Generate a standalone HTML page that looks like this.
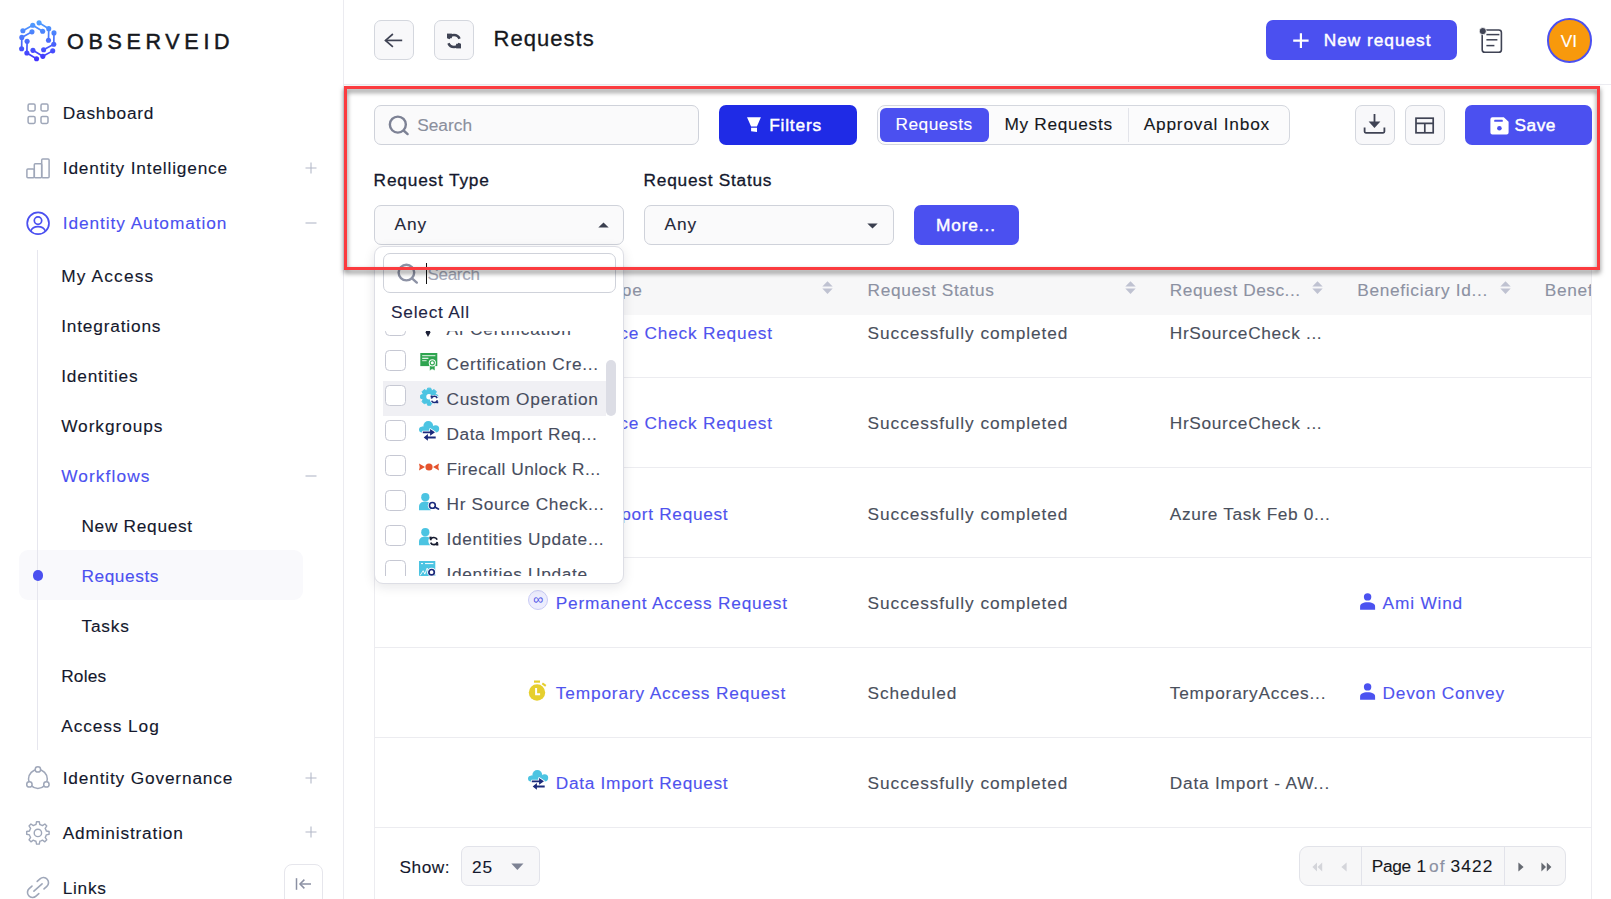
<!DOCTYPE html>
<html lang="en"><head><meta charset="utf-8"><title>Requests - ObserveID</title>
<style>
html,body{margin:0;padding:0;}
body{width:1611px;height:899px;overflow:hidden;position:relative;background:#fff;
font-family:"Liberation Sans",sans-serif;-webkit-font-smoothing:antialiased;}
.abs{position:absolute}
</style></head><body>
<nav><div style="position:absolute;left:343px;top:0px;width:1.0px;height:899.0px;box-sizing:border-box;background:#ebebf0"></div><span style="position:absolute;left:67.0px;top:27.5px;font-size:21.5px;font-weight:400;color:#16181d;line-height:28px;letter-spacing:4.690px;white-space:nowrap;-webkit-text-stroke:0.5px #16181d;">OBSERVEID</span><span style="position:absolute;left:62.8px;top:101.0px;font-size:17.3px;font-weight:400;color:#14182d;line-height:24px;letter-spacing:0.767px;white-space:nowrap;-webkit-text-stroke:0.12px #14182d;">Dashboard</span><span style="position:absolute;left:62.8px;top:155.9px;font-size:17.3px;font-weight:400;color:#14182d;line-height:24px;letter-spacing:0.821px;white-space:nowrap;-webkit-text-stroke:0.12px #14182d;">Identity Intelligence</span><span style="position:absolute;left:62.8px;top:210.8px;font-size:17.3px;font-weight:400;color:#4b50f0;line-height:24px;letter-spacing:0.922px;white-space:nowrap;-webkit-text-stroke:0.12px #4b50f0;">Identity Automation</span><div style="position:absolute;left:37px;top:250px;width:1.0px;height:500.0px;box-sizing:border-box;background:#e6e6ee"></div><span style="position:absolute;left:61.2px;top:263.9px;font-size:17.3px;font-weight:400;color:#14182d;line-height:24px;letter-spacing:1.173px;white-space:nowrap;-webkit-text-stroke:0.12px #14182d;">My Access</span><span style="position:absolute;left:61.2px;top:313.9px;font-size:17.3px;font-weight:400;color:#14182d;line-height:24px;letter-spacing:0.815px;white-space:nowrap;-webkit-text-stroke:0.12px #14182d;">Integrations</span><span style="position:absolute;left:61.2px;top:363.9px;font-size:17.3px;font-weight:400;color:#14182d;line-height:24px;letter-spacing:0.812px;white-space:nowrap;-webkit-text-stroke:0.12px #14182d;">Identities</span><span style="position:absolute;left:61.2px;top:414.1px;font-size:17.3px;font-weight:400;color:#14182d;line-height:24px;letter-spacing:0.936px;white-space:nowrap;-webkit-text-stroke:0.12px #14182d;">Workgroups</span><span style="position:absolute;left:61.2px;top:464.1px;font-size:17.3px;font-weight:400;color:#4b50f0;line-height:24px;letter-spacing:1.099px;white-space:nowrap;-webkit-text-stroke:0.12px #4b50f0;">Workflows</span><span style="position:absolute;left:81.4px;top:513.9px;font-size:17.3px;font-weight:400;color:#14182d;line-height:24px;letter-spacing:0.703px;white-space:nowrap;-webkit-text-stroke:0.12px #14182d;">New Request</span><div style="position:absolute;left:19px;top:550px;width:284.0px;height:50.0px;box-sizing:border-box;background:#f9f9fc;border-radius:9px"></div><div style="position:absolute;left:37px;top:550px;width:1.0px;height:50.0px;box-sizing:border-box;background:#e6e6ee"></div><div style="position:absolute;left:32.8px;top:570.4px;width:10.6px;height:10.6px;box-sizing:border-box;background:#4b50f0;border-radius:50%"></div><span style="position:absolute;left:81.4px;top:564.0px;font-size:17.3px;font-weight:400;color:#4b50f0;line-height:24px;letter-spacing:0.581px;white-space:nowrap;-webkit-text-stroke:0.12px #4b50f0;">Requests</span><span style="position:absolute;left:81.4px;top:614.0px;font-size:17.3px;font-weight:400;color:#14182d;line-height:24px;letter-spacing:0.848px;white-space:nowrap;-webkit-text-stroke:0.12px #14182d;">Tasks</span><span style="position:absolute;left:61.2px;top:664.0px;font-size:17.3px;font-weight:400;color:#14182d;line-height:24px;letter-spacing:0.198px;white-space:nowrap;-webkit-text-stroke:0.12px #14182d;">Roles</span><span style="position:absolute;left:61.2px;top:714.0px;font-size:17.3px;font-weight:400;color:#14182d;line-height:24px;letter-spacing:0.915px;white-space:nowrap;-webkit-text-stroke:0.12px #14182d;">Access Log</span><span style="position:absolute;left:62.7px;top:766.0px;font-size:17.3px;font-weight:400;color:#14182d;line-height:24px;letter-spacing:0.834px;white-space:nowrap;-webkit-text-stroke:0.12px #14182d;">Identity Governance</span><span style="position:absolute;left:62.7px;top:820.5px;font-size:17.3px;font-weight:400;color:#14182d;line-height:24px;letter-spacing:0.822px;white-space:nowrap;-webkit-text-stroke:0.12px #14182d;">Administration</span><span style="position:absolute;left:62.7px;top:875.8px;font-size:17.3px;font-weight:400;color:#14182d;line-height:24px;letter-spacing:0.734px;white-space:nowrap;-webkit-text-stroke:0.12px #14182d;">Links</span><svg style="position:absolute;left:0;top:0" width="80" height="80" viewBox="0 0 80 80"><defs><linearGradient id="lg" gradientUnits="userSpaceOnUse" x1="0" y1="21" x2="0" y2="61"><stop offset="0" stop-color="#4fa2ff"/><stop offset="0.5" stop-color="#4a6cfb"/><stop offset="1" stop-color="#4230ff"/></linearGradient></defs><path d="M22.88 30.73L32.75 25.25L42.66 31.27" stroke="url(#lg)" stroke-width="1.7" stroke-linejoin="round" fill="none"/><circle cx="22.88" cy="30.73" r="2.55" fill="url(#lg)"/><circle cx="32.75" cy="25.25" r="2.55" fill="url(#lg)"/><circle cx="42.66" cy="31.27" r="2.55" fill="url(#lg)"/><path d="M39.06 22.84L48.74 28.65L48.49 40.24" stroke="url(#lg)" stroke-width="1.7" stroke-linejoin="round" fill="none"/><circle cx="39.06" cy="22.84" r="2.55" fill="url(#lg)"/><circle cx="48.74" cy="28.65" r="2.55" fill="url(#lg)"/><circle cx="48.49" cy="40.24" r="2.55" fill="url(#lg)"/><path d="M53.98 32.91L53.79 44.20L43.63 49.77" stroke="url(#lg)" stroke-width="1.7" stroke-linejoin="round" fill="none"/><circle cx="53.98" cy="32.91" r="2.55" fill="url(#lg)"/><circle cx="53.79" cy="44.20" r="2.55" fill="url(#lg)"/><circle cx="43.63" cy="49.77" r="2.55" fill="url(#lg)"/><path d="M52.72 50.87L42.85 56.35L32.94 50.33" stroke="url(#lg)" stroke-width="1.7" stroke-linejoin="round" fill="none"/><circle cx="52.72" cy="50.87" r="2.55" fill="url(#lg)"/><circle cx="42.85" cy="56.35" r="2.55" fill="url(#lg)"/><circle cx="32.94" cy="50.33" r="2.55" fill="url(#lg)"/><path d="M36.54 58.76L26.86 52.95L27.11 41.36" stroke="url(#lg)" stroke-width="1.7" stroke-linejoin="round" fill="none"/><circle cx="36.54" cy="58.76" r="2.55" fill="url(#lg)"/><circle cx="26.86" cy="52.95" r="2.55" fill="url(#lg)"/><circle cx="27.11" cy="41.36" r="2.55" fill="url(#lg)"/><path d="M21.62 48.69L21.81 37.40L31.97 31.83" stroke="url(#lg)" stroke-width="1.7" stroke-linejoin="round" fill="none"/><circle cx="21.62" cy="48.69" r="2.55" fill="url(#lg)"/><circle cx="21.81" cy="37.40" r="2.55" fill="url(#lg)"/><circle cx="31.97" cy="31.83" r="2.55" fill="url(#lg)"/></svg><svg style="position:absolute;left:0px;top:0px;top:0" width="60" height="130" viewBox="0 0 60 130" fill="none"><rect x="28.1" y="104" width="7" height="7" rx="1.4" stroke="#9fa7b9" stroke-width="1.5"/><rect x="41" y="104" width="7" height="7" rx="1.4" stroke="#9fa7b9" stroke-width="1.5"/><rect x="28.1" y="116.4" width="7" height="7" rx="1.4" stroke="#9fa7b9" stroke-width="1.5"/><rect x="41" y="116.4" width="7" height="7" rx="1.4" stroke="#9fa7b9" stroke-width="1.5"/></svg><svg style="position:absolute;left:0px;top:150px;" width="60" height="40" viewBox="0 0 60 40" fill="none"><g stroke="#9fa7b9" stroke-width="1.5" stroke-linejoin="round"><rect x="26.9" y="19" width="7.4" height="8.7" rx="1"/><rect x="34.3" y="13.8" width="7.4" height="13.9" rx="1"/><rect x="41.7" y="8.9" width="7.4" height="18.8" rx="1"/></g></svg><svg style="position:absolute;left:20px;top:205px;" width="36" height="36" viewBox="0 0 36 36" fill="none"><g stroke="#4b50f0" stroke-width="1.7" fill="none"><circle cx="18.1" cy="18.3" r="10.9"/><circle cx="18" cy="15.6" r="3.7"/><path d="M10.6 26.2c1.2-3 4.1-4.6 7.4-4.6s6.3 1.6 7.5 4.6"/></g></svg><svg style="position:absolute;left:20px;top:760px;" width="36" height="36" viewBox="0 0 36 36" fill="none"><g stroke="#9fa7b9" stroke-width="1.5" fill="#fff"><circle cx="17.9" cy="19" r="9.4" fill="none"/><circle cx="17.9" cy="9.4" r="2.7"/><circle cx="9.4" cy="24.4" r="2.7"/><circle cx="26.4" cy="24.4" r="2.7"/></g></svg><svg style="position:absolute;left:20px;top:815px;" width="36" height="36" viewBox="0 0 36 36" fill="none"><path d="M14.84 9.86L15.97 9.52L16.53 6.68L19.27 6.68L19.83 9.52L21.42 10.05L22.47 10.61L24.86 9.00L26.80 10.94L25.19 13.33L25.94 14.84L26.28 15.97L29.12 16.53L29.12 19.27L26.28 19.83L25.75 21.42L25.19 22.47L26.80 24.86L24.86 26.80L22.47 25.19L20.96 25.94L19.83 26.28L19.27 29.12L16.53 29.12L15.97 26.28L14.38 25.75L13.33 25.19L10.94 26.80L9.00 24.86L10.61 22.47L9.86 20.96L9.52 19.83L6.68 19.27L6.68 16.53L9.52 15.97L10.05 14.38L10.61 13.33L9.00 10.94L10.94 9.00L13.33 10.61Z" stroke="#9fa7b9" stroke-width="1.4" stroke-linejoin="round"/><circle cx="17.9" cy="17.9" r="3.7" stroke="#9fa7b9" stroke-width="1.4"/></svg><svg style="position:absolute;left:20px;top:870px;" width="36" height="36" viewBox="0 0 36 36" fill="none"><g transform="rotate(-42 18 17.5)" stroke="#9fa7b9" stroke-width="1.6" stroke-linecap="round" fill="none"><path d="M14.5 12.4h-3.8a5.1 5.1 0 0 0 0 10.2h3.8"/><path d="M21.5 12.4h3.8a5.1 5.1 0 0 1 0 10.2h-3.8"/><path d="M12.5 17.5h11"/></g></svg><svg style="position:absolute;left:304.5px;top:161.7px;" width="12" height="12" viewBox="0 0 12 12" fill="none"><path d="M6 0.5v11M0.5 6h11" stroke="#b3b8c8" stroke-width="1.1"/></svg><svg style="position:absolute;left:304.5px;top:216.5px;" width="12" height="12" viewBox="0 0 12 12" fill="none"><path d="M0.5 6h11" stroke="#b3b8c8" stroke-width="1.1"/></svg><svg style="position:absolute;left:304.5px;top:469.9px;" width="12" height="12" viewBox="0 0 12 12" fill="none"><path d="M0.5 6h11" stroke="#b3b8c8" stroke-width="1.1"/></svg><svg style="position:absolute;left:304.5px;top:771.7px;" width="12" height="12" viewBox="0 0 12 12" fill="none"><path d="M6 0.5v11M0.5 6h11" stroke="#b3b8c8" stroke-width="1.1"/></svg><svg style="position:absolute;left:304.5px;top:826.3px;" width="12" height="12" viewBox="0 0 12 12" fill="none"><path d="M6 0.5v11M0.5 6h11" stroke="#b3b8c8" stroke-width="1.1"/></svg><div style="position:absolute;left:284.3px;top:863.9px;width:39.2px;height:46.1px;box-sizing:border-box;border:1px solid #e6e6ec;border-radius:8px;background:#fff"></div><svg style="position:absolute;left:294px;top:874px;" width="20" height="20" viewBox="0 0 20 20" fill="none"><g stroke="#8b90a3" stroke-width="1.5" fill="none"><path d="M2.5 4.2v11.6"/><path d="M17 10H6.2"/><path d="M10.4 5.6L6 10l4.4 4.4"/></g></svg></nav><header><div style="position:absolute;left:344px;top:84px;width:1267.0px;height:1.0px;box-sizing:border-box;background:#ececf1"></div><div style="position:absolute;left:374.2px;top:20.1px;width:39.6px;height:39.6px;box-sizing:border-box;background:#f8f8fa;border:1px solid #d4d7de;border-radius:7px"></div><div style="position:absolute;left:434.2px;top:20.1px;width:39.6px;height:39.6px;box-sizing:border-box;background:#f8f8fa;border:1px solid #d4d7de;border-radius:7px"></div><h1 style="position:absolute;left:493.6px;top:24.1px;font-size:22px;font-weight:400;color:#16181d;line-height:30px;letter-spacing:1.021px;white-space:nowrap;-webkit-text-stroke:0.3px #16181d;margin:0;">Requests</h1><div style="position:absolute;left:1266px;top:20px;width:191.0px;height:39.9px;box-sizing:border-box;background:#4b50f0;border-radius:7px"></div><span style="position:absolute;left:1323.7px;top:27.6px;font-size:17.3px;font-weight:400;color:#fff;line-height:24px;letter-spacing:0.983px;white-space:nowrap;-webkit-text-stroke:0.45px #fff;">New request</span><svg style="position:absolute;left:380px;top:30px;" width="30" height="22" viewBox="0 0 30 22" fill="none"><g stroke="#3f4354" stroke-width="1.7" fill="none" stroke-linejoin="miter"><path d="M5.6 10.4h16.6"/><path d="M12.9 4.0L5.5 10.4L12.9 16.8"/></g></svg><svg style="position:absolute;left:441.90px;top:28.50px" width="24.0" height="24.0" viewBox="0 0 24 24"><path d="M6.44 9.75A6.0 6.0 0 0 1 17.56 9.75" stroke="#3f4354" stroke-width="2.5" fill="none"/><path d="M17.56 14.25A6.0 6.0 0 0 1 6.44 14.25" stroke="#3f4354" stroke-width="2.5" fill="none"/><path d="M5.0 4.6h4.9v4.6H5.0z" fill="#3f4354"/><path d="M19.0 19.4h-4.9v-4.6H19.0z" fill="#3f4354"/></svg><svg style="position:absolute;left:1292px;top:32px;" width="18" height="18" viewBox="0 0 18 18" fill="none"><path d="M8.9 1.2v14.9M1.2 8.6h15.4" stroke="#fff" stroke-width="2.2"/></svg><svg style="position:absolute;left:1476px;top:25px;" width="30" height="32" viewBox="0 0 30 32" fill="none"><rect x="6.2" y="5" width="19.2" height="22.3" rx="2.6" stroke="#3f4354" stroke-width="1.6" fill="#fff"/><circle cx="6.8" cy="6.1" r="3.6" fill="#3f4354" stroke="#fff" stroke-width="0.8"/><g stroke="#3f4354" stroke-width="1.5"><path d="M10.4 9.6h13"/><path d="M10.4 14.8h11"/><path d="M10.4 20.6h8"/></g></svg><div style="position:absolute;left:1547px;top:18px;width:44.6px;height:44.6px;box-sizing:border-box;background:#f8990c;border:2px solid #4b50f0;border-radius:50%"></div><span style="position:absolute;left:1560.7px;top:28.8px;font-size:17.3px;font-weight:400;color:#fff;line-height:24px;letter-spacing:0.052px;white-space:nowrap;-webkit-text-stroke:0.12px #fff;">VI</span></header><main><div style="position:absolute;left:374px;top:268px;width:1.0px;height:631.0px;box-sizing:border-box;background:#ececf0"></div><div style="position:absolute;left:1591px;top:268px;width:1.0px;height:631.0px;box-sizing:border-box;background:#ececf0"></div><div style="position:absolute;left:375px;top:268px;width:1216.0px;height:46.6px;box-sizing:border-box;background:#f7f7f8"></div><span style="position:absolute;left:526.4px;top:278.4px;font-size:17.3px;font-weight:400;color:#8c91a2;line-height:24px;letter-spacing:0.832px;white-space:nowrap;-webkit-text-stroke:0.12px #8c91a2;">Request Type</span><span style="position:absolute;left:867.6px;top:278.4px;font-size:17.3px;font-weight:400;color:#8c91a2;line-height:24px;letter-spacing:0.624px;white-space:nowrap;-webkit-text-stroke:0.12px #8c91a2;">Request Status</span><span style="position:absolute;left:1169.8px;top:278.4px;font-size:17.3px;font-weight:400;color:#8c91a2;line-height:24px;letter-spacing:0.523px;white-space:nowrap;-webkit-text-stroke:0.12px #8c91a2;">Request Desc...</span><span style="position:absolute;left:1357.2px;top:278.4px;font-size:17.3px;font-weight:400;color:#8c91a2;line-height:24px;letter-spacing:0.686px;white-space:nowrap;-webkit-text-stroke:0.12px #8c91a2;">Beneficiary Id...</span><div style="position:absolute;left:1545.3px;top:278px;width:45.7px;height:24.0px;box-sizing:border-box;overflow:hidden"><span style="position:absolute;left:-0.6px;top:0.2px;font-size:17.3px;font-weight:400;color:#8c91a2;line-height:24px;letter-spacing:0.692px;white-space:nowrap;-webkit-text-stroke:0.12px #8c91a2;">Beneficiary</span></div><svg style="position:absolute;left:822.0px;top:281.2px;" width="11" height="13.2" viewBox="0 0 11 13.2" fill="none"><path d="M0.3 5.6L5.5 0.2L10.7 5.6z" fill="#bfc2d1"/><path d="M0.3 7.6L5.5 13L10.7 7.6z" fill="#bfc2d1"/></svg><svg style="position:absolute;left:1124.5px;top:281.2px;" width="11" height="13.2" viewBox="0 0 11 13.2" fill="none"><path d="M0.3 5.6L5.5 0.2L10.7 5.6z" fill="#bfc2d1"/><path d="M0.3 7.6L5.5 13L10.7 7.6z" fill="#bfc2d1"/></svg><svg style="position:absolute;left:1312.1px;top:281.2px;" width="11" height="13.2" viewBox="0 0 11 13.2" fill="none"><path d="M0.3 5.6L5.5 0.2L10.7 5.6z" fill="#bfc2d1"/><path d="M0.3 7.6L5.5 13L10.7 7.6z" fill="#bfc2d1"/></svg><svg style="position:absolute;left:1499.7px;top:281.2px;" width="11" height="13.2" viewBox="0 0 11 13.2" fill="none"><path d="M0.3 5.6L5.5 0.2L10.7 5.6z" fill="#bfc2d1"/><path d="M0.3 7.6L5.5 13L10.7 7.6z" fill="#bfc2d1"/></svg><a style="position:absolute;left:554.3px;top:321.4px;font-size:17.3px;font-weight:400;color:#4f53ee;line-height:24px;letter-spacing:0.770px;white-space:nowrap;-webkit-text-stroke:0.12px #4f53ee;">Hr Source Check Request</a><span style="position:absolute;left:867.6px;top:321.4px;font-size:17.3px;font-weight:400;color:#4a4f5c;line-height:24px;letter-spacing:0.919px;white-space:nowrap;-webkit-text-stroke:0.12px #4a4f5c;">Successfully completed</span><span style="position:absolute;left:1169.8px;top:321.4px;font-size:17.3px;font-weight:400;color:#4a4f5c;line-height:24px;letter-spacing:0.668px;white-space:nowrap;-webkit-text-stroke:0.12px #4a4f5c;">HrSourceCheck ...</span><svg style="position:absolute;left:528.00px;top:322.60px" width="22" height="20" viewBox="0 0 22 20"><circle cx="6.3" cy="4.2" r="4.1" fill="#4cc4e2"/><path d="M0 17.2v-3.6c0-3 2.4-5.2 6.3-5.2c2.6 0 4.6 0.9 5.6 2.6v6.2z" fill="#4cc4e2"/><circle cx="13.4" cy="12.4" r="4.6" fill="#fff"/><path d="M15.5 14.2l4.2 2.4" stroke="#fff" stroke-width="3.4" stroke-linecap="round"/><circle cx="13.4" cy="12.4" r="2.9" fill="#fff" stroke="#1b2a7b" stroke-width="1.6"/><path d="M15.8 14.1l3.6 2" stroke="#1b2a7b" stroke-width="1.7" stroke-linecap="round"/></svg><div style="position:absolute;left:375px;top:377.1px;width:1216.0px;height:1.0px;box-sizing:border-box;background:#ececf0"></div><a style="position:absolute;left:554.3px;top:411.4px;font-size:17.3px;font-weight:400;color:#4f53ee;line-height:24px;letter-spacing:0.770px;white-space:nowrap;-webkit-text-stroke:0.12px #4f53ee;">Hr Source Check Request</a><span style="position:absolute;left:867.6px;top:411.4px;font-size:17.3px;font-weight:400;color:#4a4f5c;line-height:24px;letter-spacing:0.919px;white-space:nowrap;-webkit-text-stroke:0.12px #4a4f5c;">Successfully completed</span><span style="position:absolute;left:1169.8px;top:411.4px;font-size:17.3px;font-weight:400;color:#4a4f5c;line-height:24px;letter-spacing:0.668px;white-space:nowrap;-webkit-text-stroke:0.12px #4a4f5c;">HrSourceCheck ...</span><svg style="position:absolute;left:528.00px;top:412.70px" width="22" height="20" viewBox="0 0 22 20"><circle cx="6.3" cy="4.2" r="4.1" fill="#4cc4e2"/><path d="M0 17.2v-3.6c0-3 2.4-5.2 6.3-5.2c2.6 0 4.6 0.9 5.6 2.6v6.2z" fill="#4cc4e2"/><circle cx="13.4" cy="12.4" r="4.6" fill="#fff"/><path d="M15.5 14.2l4.2 2.4" stroke="#fff" stroke-width="3.4" stroke-linecap="round"/><circle cx="13.4" cy="12.4" r="2.9" fill="#fff" stroke="#1b2a7b" stroke-width="1.6"/><path d="M15.8 14.1l3.6 2" stroke="#1b2a7b" stroke-width="1.7" stroke-linecap="round"/></svg><div style="position:absolute;left:375px;top:467.2px;width:1216.0px;height:1.0px;box-sizing:border-box;background:#ececf0"></div><a style="position:absolute;left:555.8px;top:501.5px;font-size:17.3px;font-weight:400;color:#4f53ee;line-height:24px;letter-spacing:0.690px;white-space:nowrap;-webkit-text-stroke:0.12px #4f53ee;">Data Import Request</a><span style="position:absolute;left:867.6px;top:501.5px;font-size:17.3px;font-weight:400;color:#4a4f5c;line-height:24px;letter-spacing:0.919px;white-space:nowrap;-webkit-text-stroke:0.12px #4a4f5c;">Successfully completed</span><span style="position:absolute;left:1169.8px;top:501.5px;font-size:17.3px;font-weight:400;color:#4a4f5c;line-height:24px;letter-spacing:0.629px;white-space:nowrap;-webkit-text-stroke:0.12px #4a4f5c;">Azure Task Feb 0...</span><svg style="position:absolute;left:528.00px;top:500.60px" width="22" height="22" viewBox="0 0 22 22"><g fill="#4cc4e2"><circle cx="9.3" cy="4.9" r="4.9"/><circle cx="2.9" cy="8.6" r="2.9"/><circle cx="16.6" cy="7.8" r="3.6"/><rect x="2.9" y="5.5" width="13.7" height="6"/></g><path d="M3.8 10.5h7.3V8l4.9 3.3l-4.9 3.4v-2.5H3.8z" fill="#fff" stroke="#fff" stroke-width="1.7" stroke-linejoin="round"/><path d="M16.7 15.6H8.9v-2.5l-4.2 3.4l4.2 3.3v-2.4h7.8z" fill="#fff" stroke="#fff" stroke-width="1.7" stroke-linejoin="round"/><path d="M3.8 10.5h7.3V8l4.9 3.3l-4.9 3.4v-2.5H3.8z" fill="#1b2a7b"/><path d="M16.7 15.6H8.9v-2.5l-4.2 3.4l4.2 3.3v-2.4h7.8z" fill="#1b2a7b"/></svg><div style="position:absolute;left:375px;top:557.2px;width:1216.0px;height:1.0px;box-sizing:border-box;background:#ececf0"></div><a style="position:absolute;left:555.8px;top:591.2px;font-size:17.3px;font-weight:400;color:#4f53ee;line-height:24px;letter-spacing:0.784px;white-space:nowrap;-webkit-text-stroke:0.12px #4f53ee;">Permanent Access Request</a><span style="position:absolute;left:867.6px;top:591.2px;font-size:17.3px;font-weight:400;color:#4a4f5c;line-height:24px;letter-spacing:0.919px;white-space:nowrap;-webkit-text-stroke:0.12px #4a4f5c;">Successfully completed</span><a style="position:absolute;left:1382.6px;top:591.2px;font-size:17.3px;font-weight:400;color:#4f53ee;line-height:24px;letter-spacing:0.806px;white-space:nowrap;-webkit-text-stroke:0.12px #4f53ee;">Ami Wind</a><span style="position:absolute;left:528px;top:590.4px;width:20px;height:20px;box-sizing:border-box;border-radius:50%;background:#ededfd;border:1px solid #c9cbf6;color:#5558e8;font-size:14px;line-height:17px;text-align:center;">∞</span><svg style="position:absolute;left:1360.00px;top:592.70px" width="16" height="18" viewBox="0 0 16 18"><circle cx="7.6" cy="3.9" r="3.7" fill="#4b52f0"/><path d="M0.1 16.8v-3.2c0-2.6 2.6-4.3 7.5-4.3s7.5 1.7 7.5 4.3v3.2z" fill="#4b52f0"/></svg><div style="position:absolute;left:375px;top:647px;width:1216.0px;height:1.0px;box-sizing:border-box;background:#ececf0"></div><a style="position:absolute;left:555.8px;top:681.4px;font-size:17.3px;font-weight:400;color:#4f53ee;line-height:24px;letter-spacing:0.836px;white-space:nowrap;-webkit-text-stroke:0.12px #4f53ee;">Temporary Access Request</a><span style="position:absolute;left:867.6px;top:681.4px;font-size:17.3px;font-weight:400;color:#4a4f5c;line-height:24px;letter-spacing:0.899px;white-space:nowrap;-webkit-text-stroke:0.12px #4a4f5c;">Scheduled</span><span style="position:absolute;left:1169.8px;top:681.4px;font-size:17.3px;font-weight:400;color:#4a4f5c;line-height:24px;letter-spacing:0.787px;white-space:nowrap;-webkit-text-stroke:0.12px #4a4f5c;">TemporaryAcces...</span><a style="position:absolute;left:1382.6px;top:681.4px;font-size:17.3px;font-weight:400;color:#4f53ee;line-height:24px;letter-spacing:0.738px;white-space:nowrap;-webkit-text-stroke:0.12px #4f53ee;">Devon Convey</a><svg style="position:absolute;left:528.00px;top:680.10px" width="22" height="22" viewBox="0 0 22 22"><circle cx="9" cy="12.5" r="8.2" fill="#e6cf2e"/><rect x="6" y="0.5" width="6" height="2.2" fill="#e6cf2e"/><path d="M14.3 3.4L17.8 5.8" stroke="#e6cf2e" stroke-width="2.1"/><path d="M8.1 8v6.3h4" stroke="#fff" stroke-width="2" fill="none"/></svg><svg style="position:absolute;left:1360.00px;top:682.80px" width="16" height="18" viewBox="0 0 16 18"><circle cx="7.6" cy="3.9" r="3.7" fill="#4b52f0"/><path d="M0.1 16.8v-3.2c0-2.6 2.6-4.3 7.5-4.3s7.5 1.7 7.5 4.3v3.2z" fill="#4b52f0"/></svg><div style="position:absolute;left:375px;top:737.1px;width:1216.0px;height:1.0px;box-sizing:border-box;background:#ececf0"></div><a style="position:absolute;left:555.8px;top:771.2px;font-size:17.3px;font-weight:400;color:#4f53ee;line-height:24px;letter-spacing:0.690px;white-space:nowrap;-webkit-text-stroke:0.12px #4f53ee;">Data Import Request</a><span style="position:absolute;left:867.6px;top:771.2px;font-size:17.3px;font-weight:400;color:#4a4f5c;line-height:24px;letter-spacing:0.919px;white-space:nowrap;-webkit-text-stroke:0.12px #4a4f5c;">Successfully completed</span><span style="position:absolute;left:1169.8px;top:771.2px;font-size:17.3px;font-weight:400;color:#4a4f5c;line-height:24px;letter-spacing:0.785px;white-space:nowrap;-webkit-text-stroke:0.12px #4a4f5c;">Data Import - AW...</span><svg style="position:absolute;left:528.00px;top:770.40px" width="22" height="22" viewBox="0 0 22 22"><g fill="#4cc4e2"><circle cx="9.3" cy="4.9" r="4.9"/><circle cx="2.9" cy="8.6" r="2.9"/><circle cx="16.6" cy="7.8" r="3.6"/><rect x="2.9" y="5.5" width="13.7" height="6"/></g><path d="M3.8 10.5h7.3V8l4.9 3.3l-4.9 3.4v-2.5H3.8z" fill="#fff" stroke="#fff" stroke-width="1.7" stroke-linejoin="round"/><path d="M16.7 15.6H8.9v-2.5l-4.2 3.4l4.2 3.3v-2.4h7.8z" fill="#fff" stroke="#fff" stroke-width="1.7" stroke-linejoin="round"/><path d="M3.8 10.5h7.3V8l4.9 3.3l-4.9 3.4v-2.5H3.8z" fill="#1b2a7b"/><path d="M16.7 15.6H8.9v-2.5l-4.2 3.4l4.2 3.3v-2.4h7.8z" fill="#1b2a7b"/></svg><div style="position:absolute;left:375px;top:827px;width:1216.0px;height:1.0px;box-sizing:border-box;background:#ececf0"></div><span style="position:absolute;left:399.6px;top:854.5px;font-size:17.3px;font-weight:400;color:#14182d;line-height:24px;letter-spacing:0.462px;white-space:nowrap;-webkit-text-stroke:0.12px #14182d;">Show:</span><div style="position:absolute;left:461.2px;top:846.2px;width:78.4px;height:39.6px;box-sizing:border-box;background:#f7f7f9;border:1px solid #e2e3ea;border-radius:7px"></div><span style="position:absolute;left:472.0px;top:854.5px;font-size:17.3px;font-weight:400;color:#14182d;line-height:24px;letter-spacing:0.846px;white-space:nowrap;-webkit-text-stroke:0.12px #14182d;">25</span><svg style="position:absolute;left:510.8px;top:863px;" width="12.8" height="7.4" viewBox="0 0 12.8 7.4" fill="none"><path d="M0.3 0.4L6.4 7L12.5 0.4z" fill="#7d8294"/></svg><div style="position:absolute;left:1299.3px;top:846px;width:266.7px;height:39.7px;box-sizing:border-box;background:#f7f7f8;border:1px solid #e2e3e9;border-radius:9px"></div><div style="position:absolute;left:1361px;top:846.5px;width:1.0px;height:38.5px;box-sizing:border-box;background:#e2e3ea"></div><div style="position:absolute;left:1504.2px;top:846.5px;width:1.0px;height:38.5px;box-sizing:border-box;background:#e2e3ea"></div><svg style="position:absolute;left:1311.6px;top:861.6px;" width="11" height="10" viewBox="0 0 11 10" fill="none"><path d="M5 0.4v9.2L0.4 5zM10.2 0.4v9.2L5.6 5z" fill="#d4d5da"/></svg><svg style="position:absolute;left:1341.2px;top:861.6px;" width="6" height="10" viewBox="0 0 6 10" fill="none"><path d="M5.6 0.4v9.2L0.4 5z" fill="#d4d5da"/></svg><svg style="position:absolute;left:1518px;top:861.6px;" width="6" height="10" viewBox="0 0 6 10" fill="none"><path d="M0.4 0.4v9.2L5.6 5z" fill="#666a72"/></svg><svg style="position:absolute;left:1541.4px;top:861.6px;" width="11" height="10" viewBox="0 0 11 10" fill="none"><path d="M0.4 0.4v9.2L5 5zM5.8 0.4v9.2L10.4 5z" fill="#666a72"/></svg><span style="position:absolute;left:1371.7px;top:854.2px;font-size:17.3px;font-weight:400;color:#16181d;line-height:24px;letter-spacing:-0.332px;white-space:nowrap;-webkit-text-stroke:0.12px #16181d;">Page</span><span style="position:absolute;left:1416.4px;top:854.2px;font-size:17.3px;font-weight:400;color:#16181d;line-height:24px;letter-spacing:0.692px;white-space:nowrap;-webkit-text-stroke:0.12px #16181d;">1</span><span style="position:absolute;left:1429.1px;top:854.2px;font-size:17.3px;font-weight:400;color:#8c91a2;line-height:24px;letter-spacing:0.958px;white-space:nowrap;-webkit-text-stroke:0.12px #8c91a2;">of</span><span style="position:absolute;left:1450.5px;top:854.2px;font-size:17.3px;font-weight:400;color:#16181d;line-height:24px;letter-spacing:1.176px;white-space:nowrap;-webkit-text-stroke:0.12px #16181d;">3422</span></main><div style="position:absolute;left:345px;top:86px;width:1266.0px;height:182.0px;box-sizing:border-box;background:#fff"></div><section><div style="position:absolute;left:374.2px;top:105px;width:324.5px;height:40.0px;box-sizing:border-box;background:#fafafb;border:1px solid #cfd2da;border-radius:7px"></div><span style="position:absolute;left:417.2px;top:113.2px;font-size:17.3px;font-weight:400;color:#8a8f9d;line-height:24px;letter-spacing:0.023px;white-space:nowrap;-webkit-text-stroke:0.12px #8a8f9d;">Search</span><div style="position:absolute;left:719.1px;top:105px;width:137.8px;height:40.0px;box-sizing:border-box;background:#1f2be6;border-radius:7px"></div><span style="position:absolute;left:769.2px;top:113.2px;font-size:17.3px;font-weight:400;color:#fff;line-height:24px;letter-spacing:0.817px;white-space:nowrap;-webkit-text-stroke:0.45px #fff;">Filters</span><div style="position:absolute;left:877.1px;top:105px;width:412.6px;height:40.0px;box-sizing:border-box;background:#fbfbfc;border:1px solid #d4d7de;border-radius:8px"></div><div style="position:absolute;left:880px;top:108.2px;width:109.0px;height:33.6px;box-sizing:border-box;background:#4b50f0;border-radius:6px"></div><span style="position:absolute;left:895.4px;top:111.8px;font-size:17.3px;font-weight:400;color:#fff;line-height:24px;letter-spacing:0.538px;white-space:nowrap;-webkit-text-stroke:0.12px #fff;">Requests</span><span style="position:absolute;left:1004.4px;top:111.8px;font-size:17.3px;font-weight:400;color:#16181d;line-height:24px;letter-spacing:0.682px;white-space:nowrap;-webkit-text-stroke:0.12px #16181d;">My Requests</span><div style="position:absolute;left:1128px;top:108.2px;width:1.0px;height:33.6px;box-sizing:border-box;background:#e3e4ea"></div><span style="position:absolute;left:1143.8px;top:111.8px;font-size:17.3px;font-weight:400;color:#16181d;line-height:24px;letter-spacing:0.776px;white-space:nowrap;-webkit-text-stroke:0.12px #16181d;">Approval Inbox</span><div style="position:absolute;left:1355.2px;top:105px;width:39.6px;height:40.0px;box-sizing:border-box;background:#f8f8fa;border:1px solid #d4d7de;border-radius:7px"></div><div style="position:absolute;left:1405.1px;top:105px;width:39.6px;height:40.0px;box-sizing:border-box;background:#f8f8fa;border:1px solid #d4d7de;border-radius:7px"></div><div style="position:absolute;left:1465px;top:105px;width:127.0px;height:40.0px;box-sizing:border-box;background:#4b50f0;border-radius:7px"></div><span style="position:absolute;left:1514.6px;top:113.2px;font-size:17.3px;font-weight:400;color:#fff;line-height:24px;letter-spacing:0.453px;white-space:nowrap;-webkit-text-stroke:0.45px #fff;">Save</span><svg style="position:absolute;left:386px;top:113px;" width="26" height="26" viewBox="0 0 26 26" fill="none"><g stroke="#7d8295" stroke-width="2.4" fill="none"><circle cx="11.85" cy="11.6" r="8"/><path d="M17.6 17.5L21.6 21.1" stroke-linecap="round"/></g></svg><svg style="position:absolute;left:745px;top:115px;" width="18" height="20" viewBox="0 0 18 20" fill="none"><path d="M2 2.3h13.9L11.9 11.4H6.1z M6.1 12.8h5.9v4.2L6.1 16.2z" fill="#fff"/></svg><svg style="position:absolute;left:1360px;top:110px;" width="30" height="28" viewBox="0 0 30 28" fill="none"><g stroke="#3f4354" stroke-width="1.8" fill="none"><path d="M4.6 17.4v4.2a1.2 1.2 0 0 0 1.2 1.2h17.4a1.2 1.2 0 0 0 1.2-1.2v-4.2"/><path d="M14.5 4v9"/></g><path d="M8.6 11.6h11.8L14.5 17.9z" fill="#3f4354"/></svg><svg style="position:absolute;left:1410px;top:112px;" width="30" height="26" viewBox="0 0 30 26" fill="none"><g stroke="#3f4354" stroke-width="1.7" fill="none"><rect x="6" y="6.2" width="17.2" height="14.6"/><path d="M6 11.3h17.2M14.8 11.3v9.5"/></g></svg><svg style="position:absolute;left:1488px;top:115px;" width="24" height="22" viewBox="0 0 24 22" fill="none"><path d="M4.4 2.2h11.4l4.8 4.6v10.6a2 2 0 0 1-2 2H4.4a2 2 0 0 1-2-2V4.2a2 2 0 0 1 2-2z" fill="#fff"/><rect x="6.2" y="4.8" width="8.6" height="2" rx="0.6" fill="#4b50f0"/><circle cx="11.4" cy="13.2" r="2.3" fill="#4b50f0"/></svg><span style="position:absolute;left:373.6px;top:168.2px;font-size:17.3px;font-weight:400;color:#14182d;line-height:24px;letter-spacing:0.816px;white-space:nowrap;-webkit-text-stroke:0.3px #14182d;">Request Type</span><span style="position:absolute;left:643.6px;top:168.2px;font-size:17.3px;font-weight:400;color:#14182d;line-height:24px;letter-spacing:0.748px;white-space:nowrap;-webkit-text-stroke:0.3px #14182d;">Request Status</span><div style="position:absolute;left:374.2px;top:205px;width:249.5px;height:40.0px;box-sizing:border-box;background:#fafafb;border:1px solid #cfd2da;border-radius:7px"></div><div style="position:absolute;left:644.2px;top:205px;width:249.8px;height:40.0px;box-sizing:border-box;background:#fafafb;border:1px solid #cfd2da;border-radius:7px"></div><span style="position:absolute;left:394.5px;top:211.8px;font-size:17.3px;font-weight:400;color:#23273a;line-height:24px;letter-spacing:0.899px;white-space:nowrap;-webkit-text-stroke:0.12px #23273a;">Any</span><span style="position:absolute;left:664.5px;top:211.8px;font-size:17.3px;font-weight:400;color:#23273a;line-height:24px;letter-spacing:0.899px;white-space:nowrap;-webkit-text-stroke:0.12px #23273a;">Any</span><svg style="position:absolute;left:597.5px;top:221.5px;" width="11" height="6" viewBox="0 0 11 6" fill="none"><path d="M0.3 5.6L5.5 0.4L10.7 5.6z" fill="#3a3f4f"/></svg><svg style="position:absolute;left:867.3px;top:222.6px;" width="11" height="6" viewBox="0 0 11 6" fill="none"><path d="M0.3 0.4L5.5 5.6L10.7 0.4z" fill="#3a3f4f"/></svg><div style="position:absolute;left:914px;top:205px;width:105.0px;height:40.0px;box-sizing:border-box;background:#4b50f0;border-radius:7px"></div><span style="position:absolute;left:935.9px;top:213.2px;font-size:17.3px;font-weight:400;color:#fff;line-height:24px;letter-spacing:0.878px;white-space:nowrap;-webkit-text-stroke:0.45px #fff;">More...</span></section><div><div style="position:absolute;left:374.4px;top:246px;width:249.4px;height:338.0px;box-sizing:border-box;background:#fff;border:1px solid #dddee5;border-radius:9px;box-shadow:0 3px 12px rgba(20,20,40,0.10)"></div><div style="position:absolute;left:383px;top:253.2px;width:233.0px;height:39.5px;box-sizing:border-box;background:#fff;border:1px solid #cfd2da;border-radius:7px"></div><svg style="position:absolute;left:395px;top:261px;" width="26" height="26" viewBox="0 0 26 26" fill="none"><g stroke="#8d92a5" stroke-width="2.4" fill="none"><circle cx="11.4" cy="11.6" r="7.8"/><path d="M17 17.3L21.8 21.6" stroke-linecap="round"/></g></svg><div style="position:absolute;left:426.3px;top:263px;width:1.2px;height:20.7px;box-sizing:border-box;background:#111"></div><span style="position:absolute;left:427.5px;top:262.9px;font-size:17px;font-weight:400;color:#a3a8b8;line-height:24px;letter-spacing:-0.299px;white-space:nowrap;-webkit-text-stroke:0.12px #a3a8b8;">Search</span><span style="position:absolute;left:391.0px;top:299.9px;font-size:17.3px;font-weight:400;color:#1f2545;line-height:24px;letter-spacing:0.765px;white-space:nowrap;-webkit-text-stroke:0.12px #1f2545;">Select All</span><div style="position:absolute;left:375px;top:331px;width:248.0px;height:244.8px;box-sizing:border-box;overflow:hidden"><div style="position:absolute;left:10.399999999999977px;top:-15.800000000000011px;width:20.6px;height:20.6px;box-sizing:border-box;background:#fff;border:1.5px solid #c6c8d3;border-radius:4.5px"></div><span style="position:absolute;left:71.5px;top:-14.2px;font-size:17.3px;font-weight:400;color:#484d5e;line-height:24px;letter-spacing:0.794px;white-space:nowrap;-webkit-text-stroke:0.12px #484d5e;">AI Certification</span><svg style="position:absolute;left:44.50px;top:-8.40px" width="20" height="16" viewBox="0 0 20 16"><path d="M8 2l2.4 7.4L8 14L5.6 9.4z" fill="#1c2037"/></svg><div style="position:absolute;left:10.399999999999977px;top:19.19999999999999px;width:20.6px;height:20.6px;box-sizing:border-box;background:#fff;border:1.5px solid #c6c8d3;border-radius:4.5px"></div><span style="position:absolute;left:71.5px;top:20.8px;font-size:17.3px;font-weight:400;color:#484d5e;line-height:24px;letter-spacing:0.694px;white-space:nowrap;-webkit-text-stroke:0.12px #484d5e;">Certification Cre...</span><svg style="position:absolute;left:45.20px;top:22.00px" width="19" height="19" viewBox="0 0 19 19"><rect x="0.3" y="0" width="17" height="13.1" fill="#2ea44f"/><path d="M2.2 2.7h13.2" stroke="#fff" stroke-width="0.9"/><path d="M2.2 5.3h6.2" stroke="#fff" stroke-width="1.1"/><path d="M2.2 7.7h4.4" stroke="#fff" stroke-width="0.8"/><path d="M9.6 11v6.8l2.7-1.6l2.7 1.6V11z" fill="#2ea44f" stroke="#fff" stroke-width="0.6"/><circle cx="12.3" cy="9.8" r="3.6" fill="#fff"/><circle cx="12.3" cy="9.8" r="2.6" fill="#2ea44f"/><circle cx="12.3" cy="9.8" r="1.5" fill="#fff"/></svg><div style="position:absolute;left:8px;top:49.80000000000001px;width:223.3px;height:35.0px;box-sizing:border-box;background:#f0f0f4"></div><div style="position:absolute;left:10.399999999999977px;top:54.19999999999999px;width:20.6px;height:20.6px;box-sizing:border-box;background:#fff;border:1.5px solid #c6c8d3;border-radius:4.5px"></div><span style="position:absolute;left:71.5px;top:55.8px;font-size:17.3px;font-weight:400;color:#484d5e;line-height:24px;letter-spacing:0.750px;white-space:nowrap;-webkit-text-stroke:0.12px #484d5e;">Custom Operation</span><svg style="position:absolute;left:43.70px;top:55.80px" width="22" height="22" viewBox="0 0 22 22"><path d="M7.66 3.28L8.00 3.16L8.68 1.13L11.72 1.13L12.40 3.16L12.95 3.37L13.26 3.52L15.18 2.57L17.33 4.72L16.38 6.64L16.62 7.16L16.74 7.50L18.77 8.18L18.77 11.22L16.74 11.90L16.53 12.45L16.38 12.76L17.33 14.68L15.18 16.83L13.26 15.88L12.74 16.12L12.40 16.24L11.72 18.27L8.68 18.27L8.00 16.24L7.45 16.03L7.14 15.88L5.22 16.83L3.07 14.68L4.02 12.76L3.78 12.24L3.66 11.90L1.63 11.22L1.63 8.18L3.66 7.50L3.87 6.95L4.02 6.64L3.07 4.72L5.22 2.57L7.14 3.52Z" fill="#4cc4e2" stroke="#4cc4e2" stroke-width="1" stroke-linejoin="round"/><circle cx="10" cy="9.7" r="2.7" fill="#fff"/><circle cx="15.4" cy="12.4" r="4.5" fill="#fff"/><path d="M12.41 11.60A3.1 3.1 0 0 1 18.21 11.09" stroke="#1b2a7b" stroke-width="1.5" fill="none"/><path d="M18.39 13.20A3.1 3.1 0 0 1 12.59 13.71" stroke="#1b2a7b" stroke-width="1.5" fill="none"/><path d="M11.55 8.55h1.92v1.92h-1.92z" fill="#1b2a7b"/><path d="M19.25 16.25h-1.92v-1.92h1.92z" fill="#1b2a7b"/></svg><div style="position:absolute;left:10.399999999999977px;top:89.19999999999999px;width:20.6px;height:20.6px;box-sizing:border-box;background:#fff;border:1.5px solid #c6c8d3;border-radius:4.5px"></div><span style="position:absolute;left:71.5px;top:90.8px;font-size:17.3px;font-weight:400;color:#484d5e;line-height:24px;letter-spacing:0.529px;white-space:nowrap;-webkit-text-stroke:0.12px #484d5e;">Data Import Req...</span><svg style="position:absolute;left:43.90px;top:89.90px" width="22" height="22" viewBox="0 0 22 22"><g fill="#4cc4e2"><circle cx="9.3" cy="4.9" r="4.9"/><circle cx="2.9" cy="8.6" r="2.9"/><circle cx="16.6" cy="7.8" r="3.6"/><rect x="2.9" y="5.5" width="13.7" height="6"/></g><path d="M3.8 10.5h7.3V8l4.9 3.3l-4.9 3.4v-2.5H3.8z" fill="#fff" stroke="#fff" stroke-width="1.7" stroke-linejoin="round"/><path d="M16.7 15.6H8.9v-2.5l-4.2 3.4l4.2 3.3v-2.4h7.8z" fill="#fff" stroke="#fff" stroke-width="1.7" stroke-linejoin="round"/><path d="M3.8 10.5h7.3V8l4.9 3.3l-4.9 3.4v-2.5H3.8z" fill="#1b2a7b"/><path d="M16.7 15.6H8.9v-2.5l-4.2 3.4l4.2 3.3v-2.4h7.8z" fill="#1b2a7b"/></svg><div style="position:absolute;left:10.399999999999977px;top:124.19999999999999px;width:20.6px;height:20.6px;box-sizing:border-box;background:#fff;border:1.5px solid #c6c8d3;border-radius:4.5px"></div><span style="position:absolute;left:71.5px;top:125.8px;font-size:17.3px;font-weight:400;color:#484d5e;line-height:24px;letter-spacing:0.467px;white-space:nowrap;-webkit-text-stroke:0.12px #484d5e;">Firecall Unlock R...</span><svg style="position:absolute;left:44.10px;top:131.90px" width="20" height="8" viewBox="0 0 20 8"><circle cx="10" cy="4" r="3.6" fill="#e5532d"/><path d="M0 0.4L6 4L0 7.6L0.7 4z" fill="#e5532d"/><path d="M20 0.4L14 4L20 7.6L19.3 4z" fill="#e5532d"/></svg><div style="position:absolute;left:10.399999999999977px;top:159.2px;width:20.6px;height:20.6px;box-sizing:border-box;background:#fff;border:1.5px solid #c6c8d3;border-radius:4.5px"></div><span style="position:absolute;left:71.5px;top:160.8px;font-size:17.3px;font-weight:400;color:#484d5e;line-height:24px;letter-spacing:0.659px;white-space:nowrap;-webkit-text-stroke:0.12px #484d5e;">Hr Source Check...</span><svg style="position:absolute;left:43.90px;top:161.90px" width="22" height="20" viewBox="0 0 22 20"><circle cx="6.3" cy="4.2" r="4.1" fill="#4cc4e2"/><path d="M0 17.2v-3.6c0-3 2.4-5.2 6.3-5.2c2.6 0 4.6 0.9 5.6 2.6v6.2z" fill="#4cc4e2"/><circle cx="13.4" cy="12.4" r="4.6" fill="#fff"/><path d="M15.5 14.2l4.2 2.4" stroke="#fff" stroke-width="3.4" stroke-linecap="round"/><circle cx="13.4" cy="12.4" r="2.9" fill="#fff" stroke="#1b2a7b" stroke-width="1.6"/><path d="M15.8 14.1l3.6 2" stroke="#1b2a7b" stroke-width="1.7" stroke-linecap="round"/></svg><div style="position:absolute;left:10.399999999999977px;top:194.19999999999993px;width:20.6px;height:20.6px;box-sizing:border-box;background:#fff;border:1.5px solid #c6c8d3;border-radius:4.5px"></div><span style="position:absolute;left:71.5px;top:195.8px;font-size:17.3px;font-weight:400;color:#484d5e;line-height:24px;letter-spacing:0.688px;white-space:nowrap;-webkit-text-stroke:0.12px #484d5e;">Identities Update...</span><svg style="position:absolute;left:43.90px;top:196.90px" width="22" height="20" viewBox="0 0 22 20"><circle cx="6.3" cy="4.2" r="4.1" fill="#4cc4e2"/><path d="M0 17.2v-3.6c0-3 2.4-5.2 6.3-5.2c2.6 0 4.6 0.9 5.6 2.6v6.2z" fill="#4cc4e2"/><circle cx="14.9" cy="13.1" r="5.6" fill="#fff"/><path d="M11.42 12.17A3.6 3.6 0 0 1 18.16 11.58" stroke="#151a2e" stroke-width="1.7" fill="none"/><path d="M18.38 14.03A3.6 3.6 0 0 1 11.64 14.62" stroke="#151a2e" stroke-width="1.7" fill="none"/><path d="M10.45 8.65h2.23v2.23h-2.23z" fill="#151a2e"/><path d="M19.35 17.55h-2.23v-2.23h2.23z" fill="#151a2e"/></svg><div style="position:absolute;left:10.399999999999977px;top:229.19999999999993px;width:20.6px;height:20.6px;box-sizing:border-box;background:#fff;border:1.5px solid #c6c8d3;border-radius:4.5px"></div><span style="position:absolute;left:71.5px;top:230.8px;font-size:17.3px;font-weight:400;color:#484d5e;line-height:24px;letter-spacing:0.688px;white-space:nowrap;-webkit-text-stroke:0.12px #484d5e;">Identities Update...</span><svg style="position:absolute;left:44.10px;top:230.20px" width="22" height="20" viewBox="0 0 22 20"><rect x="0" y="0" width="16.3" height="17" fill="#4cc4e2"/><path d="M2 2.6h2M6 2.6h8.4" stroke="#fff" stroke-width="1"/><path d="M1 14.5l3.2-4.8l1.6 3.4l2.4-6l1.6 4" stroke="#fff" stroke-width="0.9" fill="none"/><circle cx="12.6" cy="11.2" r="4.4" fill="#fff"/><circle cx="12.6" cy="11.2" r="2.7" fill="#fff" stroke="#1b2a7b" stroke-width="1.7"/></svg></div><div style="position:absolute;left:606.4px;top:360.2px;width:9.6px;height:56.0px;box-sizing:border-box;background:#dcdde5;border-radius:5px"></div></div><div style="position:absolute;left:344px;top:86px;width:1256.0px;height:184.0px;box-sizing:border-box;border:3px solid #fb3b3f;filter:drop-shadow(0.5px 3.4px 2.6px rgba(0,0,0,0.55));pointer-events:none"></div>
</body></html>
